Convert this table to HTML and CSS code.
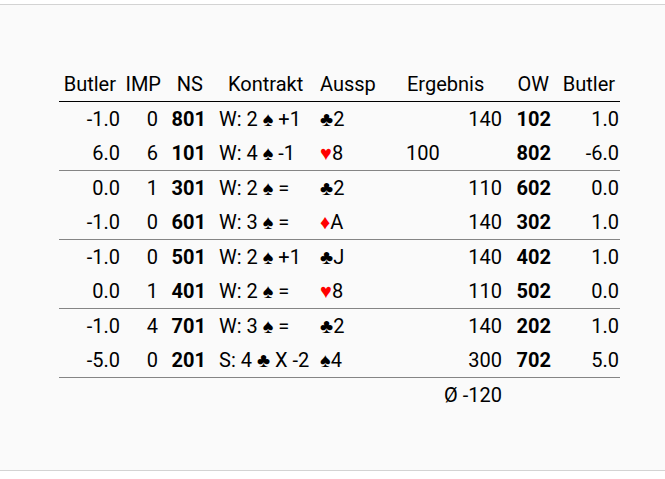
FILE: index.html
```html
<!DOCTYPE html>
<html lang="de">
<head>
<meta charset="utf-8">
<title>Ergebnisse</title>
<link rel="stylesheet" href="styles.css">
</head>
<body>
<div class="panel">
  <table class="results">
    <colgroup>
      <col class="c1"><col class="c2"><col class="c3"><col class="c4"><col class="c5"><col class="c6"><col class="c7"><col class="c8"><col class="c9">
    </colgroup>
    <thead>
      <tr>
        <th class="h-butl">Butler</th>
        <th class="h-imp">IMP</th>
        <th class="h-ns">NS</th>
        <th class="h-kon">Kontrakt</th>
        <th class="h-aus">Aussp</th>
        <th class="h-erg" colspan="2">Ergebnis</th>
        <th class="h-ow">OW</th>
        <th class="h-butr">Butler</th>
      </tr>
    </thead>
    <tbody>
      <tr>
        <td class="d-butl">-1.0</td><td class="d-imp">0</td><td class="d-ns">801</td>
        <td class="d-kon">W: 2 <span class="suit">♠</span> +1</td><td class="d-aus"><span class="suit">♣</span>2</td>
        <td class="d-nss"></td><td class="d-ews">140</td><td class="d-ow">102</td><td class="d-butr">1.0</td>
      </tr>
      <tr class="end">
        <td class="d-butl">6.0</td><td class="d-imp">6</td><td class="d-ns">101</td>
        <td class="d-kon">W: 4 <span class="suit">♠</span> -1</td><td class="d-aus"><span class="suit red">♥</span>8</td>
        <td class="d-nss">100</td><td class="d-ews"></td><td class="d-ow">802</td><td class="d-butr">-6.0</td>
      </tr>
      <tr>
        <td class="d-butl">0.0</td><td class="d-imp">1</td><td class="d-ns">301</td>
        <td class="d-kon">W: 2 <span class="suit">♠</span> =</td><td class="d-aus"><span class="suit">♣</span>2</td>
        <td class="d-nss"></td><td class="d-ews">110</td><td class="d-ow">602</td><td class="d-butr">0.0</td>
      </tr>
      <tr class="end">
        <td class="d-butl">-1.0</td><td class="d-imp">0</td><td class="d-ns">601</td>
        <td class="d-kon">W: 3 <span class="suit">♠</span> =</td><td class="d-aus"><span class="suit red">♦</span>A</td>
        <td class="d-nss"></td><td class="d-ews">140</td><td class="d-ow">302</td><td class="d-butr">1.0</td>
      </tr>
      <tr>
        <td class="d-butl">-1.0</td><td class="d-imp">0</td><td class="d-ns">501</td>
        <td class="d-kon">W: 2 <span class="suit">♠</span> +1</td><td class="d-aus"><span class="suit">♣</span>J</td>
        <td class="d-nss"></td><td class="d-ews">140</td><td class="d-ow">402</td><td class="d-butr">1.0</td>
      </tr>
      <tr class="end">
        <td class="d-butl">0.0</td><td class="d-imp">1</td><td class="d-ns">401</td>
        <td class="d-kon">W: 2 <span class="suit">♠</span> =</td><td class="d-aus"><span class="suit red">♥</span>8</td>
        <td class="d-nss"></td><td class="d-ews">110</td><td class="d-ow">502</td><td class="d-butr">0.0</td>
      </tr>
      <tr>
        <td class="d-butl">-1.0</td><td class="d-imp">4</td><td class="d-ns">701</td>
        <td class="d-kon">W: 3 <span class="suit">♠</span> =</td><td class="d-aus"><span class="suit">♣</span>2</td>
        <td class="d-nss"></td><td class="d-ews">140</td><td class="d-ow">202</td><td class="d-butr">1.0</td>
      </tr>
      <tr class="end">
        <td class="d-butl">-5.0</td><td class="d-imp">0</td><td class="d-ns">201</td>
        <td class="d-kon">S: 4 <span class="suit">♣</span> X -2</td><td class="d-aus"><span class="suit">♠</span>4</td>
        <td class="d-nss"></td><td class="d-ews">300</td><td class="d-ow">702</td><td class="d-butr">5.0</td>
      </tr>
    </tbody>
    <tfoot>
      <tr>
        <td colspan="5"></td>
        <td class="d-avg" colspan="2">Ø -120</td>
        <td colspan="2"></td>
      </tr>
    </tfoot>
  </table>
</div>
</body>
</html>
```
FILE: styles.css
```css
html, body {
  margin: 0;
  padding: 0;
  background: #ffffff;
}

body {
  padding-top: 4px;
  font-family: Roboto, "Liberation Sans", sans-serif;
  color: #000;
}

.panel {
  background: #fafafa;
  border-top: 1px solid #d3d3d3;
  border-bottom: 1px solid #d3d3d3;
  height: 403px;
  padding-top: 62px;
  box-sizing: content-box;
}

.results {
  margin-left: 59px;
  border-collapse: separate;
  border-spacing: 0;
  table-layout: fixed;
  width: 561px;
  font-size: 20px;
}

.c1 { width: 65px; }
.c2 { width: 40px; }
.c3 { width: 48px; }
.c4 { width: 102px; }
.c5 { width: 86px; }
.c6 { width: 54px; }
.c7 { width: 54px; }
.c8 { width: 48px; }
.c9 { width: 64px; }

.results th,
.results td {
  padding: 0;
  height: 34px;
  line-height: 34px;
  white-space: nowrap;
  font-weight: 400;
}

.results th {
  border-bottom: 1px solid #000;
}

.h-butl { text-align: right; padding-right: 8px !important; }
.h-imp  { text-align: right; padding-right: 3px !important; }
.h-ns   { text-align: right; padding-right: 9px !important; }
.h-kon  { text-align: left;  padding-left: 16px !important; }
.h-aus  { text-align: left;  padding-left: 6px !important; }
.h-erg  { text-align: left;  padding-left: 7px !important; }
.h-ow   { text-align: right; padding-right: 7px !important; }
.h-butr { text-align: right; padding-right: 5px !important; }

.d-butl { text-align: right; padding-right: 4px !important; }
.d-imp  { text-align: right; padding-right: 6px !important; }
.d-ns   { text-align: right; padding-right: 6px !important; font-weight: 700 !important; }
.d-kon  { text-align: left;  padding-left: 7px !important; }
.d-aus  { text-align: left;  padding-left: 6px !important; }
.d-nss  { text-align: left;  padding-left: 6px !important; }
.d-ews  { text-align: right; padding-right: 6px !important; }
.d-ow   { text-align: right; padding-right: 5px !important; font-weight: 700 !important; }
.d-butr { text-align: right; padding-right: 1px !important; }
.d-avg  { text-align: right; padding-right: 6px !important; }

.results tr.end td {
  border-bottom: 1px solid #858585;
}

.suit.red {
  color: #ff0000;
}
```
